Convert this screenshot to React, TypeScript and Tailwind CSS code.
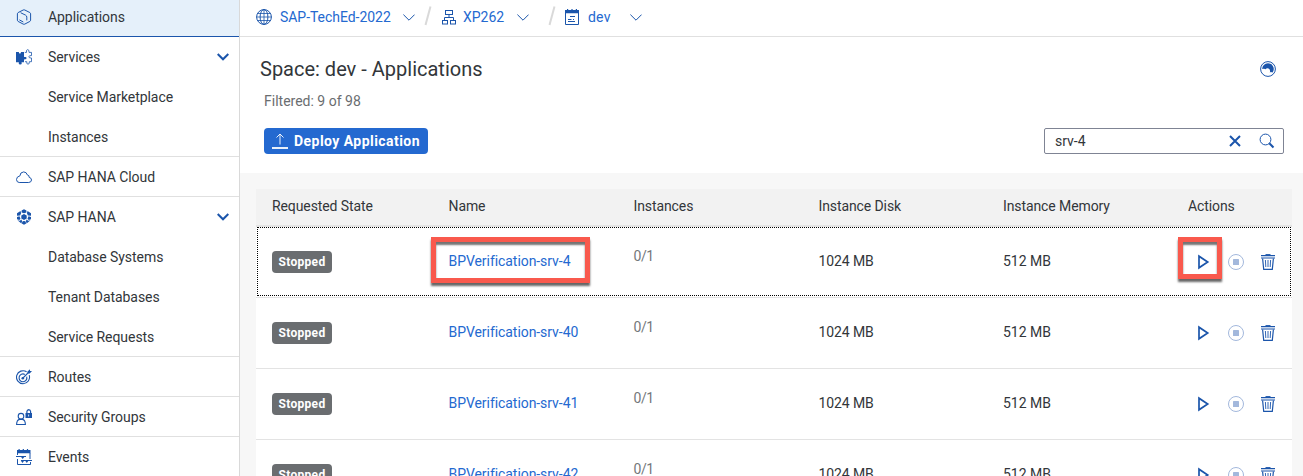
import React from "react";

type IconProps = { className?: string };

function Svg({ className = "", children }: { className?: string; children: React.ReactNode }) {
  return (
    <svg
      viewBox="0 0 16 16"
      width="16"
      height="16"
      fill="none"
      stroke="currentColor"
      strokeWidth="1"
      className={"shrink-0 " + className}
    >
      {children}
    </svg>
  );
}

const AppIcon = () => (
  <Svg>
    <path d="M7.200 1q.8-.4 1.600 0l5.100 2.600q.7.400.7 1.200v6.400q0 .8-.7 1.200l-5.100 2.700q-.8.400-1.600 0l-5.100-2.700q-.7-.4-.7-1.200V4.800q0-.8.7-1.200z" />
    <path d="m4.600 3.700 4.900 2.400q1.300.7 1.300 2v3.300M3.400 10.900l3.900 2.100" />
  </Svg>
);

const PuzzleIcon = () => (
  <Svg>
    <path
      fill="currentColor"
      stroke="none"
      d="M0 3h3q-.3.5 0 1.100.9 1 1.800 0 .3-.6 0-1.100H8v4.700q.2.600 1.200.3 1.300-.2 1.300 1.100t-1.300 1.200q-1-.3-1.200.5v2.400H5.600q-.2.300.2.900 0 1.500-1.600 1.500t-1.500-1.500q.3-.6.100-.9H0z"
    />
    <path
      strokeWidth=".8"
      d="M8.800 3.400h1.700q-.5-2.700 1.200-2.800 1.700.1 1.300 2.800h2.500v3.200q-2.600-.3-2.600 1.200t2.600 1.200v3.700h-2.200q.4 2.400-1.300 2.500-1.700-.1-1.200-2.500H9"
    />
  </Svg>
);

const CloudIcon = () => (
  <Svg>
    <path d="M3.200 13.500h9.500q2.700-.2 2.800-2.500-.1-2.200-2.300-2.600.2-2.300-1.900-2.500-.6-2.800-3.600-3-3.600.2-3.800 4Q.600 7.500.5 10.500q.1 2.900 2.700 3z" />
  </Svg>
);

const HanaIcon = () => (
  <Svg>
    <g fill="currentColor" stroke="none">
      <path d="m8 4.900 2.700 1.600v3L8 11.100 5.300 9.500v-3z" />
      <path d="M5.600 1.600 8 .2l2.400 1.400v1.900L8 4.200l-2.400-.7z" />
      <path d="m1 4.200 3.500-2.100.6 2.200-1 2.200L1 6.800zM15 4.200l-3.500-2.100-.6 2.200 1 2.200 3.100.3z" />
      <path d="M1 7.900 3.500 7.300 4.500 9.800 3.300 11 1 10.200zM15 7.900l-2.500-.6-1 2.500L12.700 11l2.300-.8z" />
      <path d="m1.500 11.300 2.400.5 1.400-1.200.8 1.500-.7 2.300zM14.500 11.300l-2.400.5-1.400-1.200-.8 1.500.7 2.300z" />
      <path d="M6.600 12.300 8 11.900l1.400.4.8 2.200L8 15.800l-2.200-1.300z" />
    </g>
  </Svg>
);

const TargetIcon = () => (
  <Svg>
    <path d="M10.600 2.800A6.500 6.500 0 1 0 13.200 6.200" strokeWidth="1.100" />
    <path d="M8.800 5.400A3.900 3.900 0 1 0 10.700 7.700" strokeWidth="1.100" />
    <path strokeWidth="1.300" d="m6.600 9.400 6-6" />
    <circle cx="6.800" cy="9.200" r="1.300" fill="currentColor" stroke="none" />
    <path fill="currentColor" stroke="none" d="m11.500 2.400 2.500-2.200v1.800h2l-2.300 2.500h-2.200z" />
  </Svg>
);

const UserLockIcon = () => (
  <Svg>
    <circle cx="5" cy="7.200" r="2.800" strokeWidth="1.100" />
    <path strokeWidth="1.100" d="M.6 15.500q.1-4.600 3-5.100h2.800q2.900.5 3 5.100z" />
    <path strokeWidth="1.200" d="M10.900 4.500V2.500q.2-1.800 1.900-1.900 1.600.1 1.800 1.900v2" />
    <path fill="currentColor" stroke="none" fillRule="evenodd" d="M9.500 4H16v5H9.500zm2.800 1.500v2h.8v-2z" />
  </Svg>
);

const EventsIcon = () => (
  <Svg>
    <path fill="currentColor" stroke="none" d="M1 1h1.500V0h1.200v1h3V0h1.200v1h3V0h1.200v1H14.500v3.300H1z" />
    <path d="M1.500 4v2M14 4v6M1.500 10v5.500H14.500V13" />
    <path d="M0 7.500h10M5 11.500h11" />
    <path fill="currentColor" stroke="none" d="M4.700 7.500h4L6.700 10zM4.700 11.500h3.600L6.500 13.900zM9 11.500h3.600l-1.800 2.400z" />
  </Svg>
);

const GlobeIcon = () => (
  <Svg>
    <circle cx="8" cy="8" r="7.400" />
    <ellipse cx="8" cy="8" rx="3.900" ry="7.400" />
    <path d="M8 .6v14.800M1.600 4.500h12.800M.6 8h14.800M1.600 11.500h12.800" strokeWidth=".8" />
  </Svg>
);

const OrgIcon = () => (
  <Svg>
    <rect x="4.500" y="1.500" width="7" height="4" />
    <path d="M8 5.500v3M3.500 11.500v-3h9v3" />
    <rect x="1.500" y="11.500" width="5" height="3.500" />
    <rect x="9.500" y="11.500" width="5" height="3.500" />
  </Svg>
);

const SpaceIcon = () => (
  <Svg>
    <path d="M1.500 3.500v12h13v-12" />
    <path fill="currentColor" stroke="none" d="M1 1h2V0h1.200v1h3.200V0h1.200v1h3.200V0H13v1h2v3.200H1z" />
    <path d="M6 7.500h5M4 10.500h3.500M9 10.500h1M4 12.500h7" />
  </Svg>
);

const SyncIcon = () => (
  <Svg>
    <circle cx="8" cy="8" r="7.400" />
    <path
      fill="currentColor"
      stroke="none"
      d="M2.200 8A5.800 5.600 0 0 1 8 2.200 5.800 5.800 0 0 1 12.600 11.400l-1.700-.5-1.100.7Q10.800 8.500 8.500 7.500 6.500 6.900 5.600 8.300L4 7.700z"
    />
  </Svg>
);

const UploadIcon = () => (
  <Svg>
    <path d="M8 11.500V1M4.500 4.500 8 1l3.500 3.500" strokeWidth=".9" />
    <path d="M0 15h16" strokeWidth="1.800" />
  </Svg>
);

const CloseIcon = () => (
  <Svg>
    <path strokeWidth="2" d="m3 3 10 10M13 3 3 13" />
  </Svg>
);

const SearchIcon = () => (
  <Svg>
    <circle cx="6.500" cy="6.500" r="5.400" />
    <path strokeWidth="2" d="m10.300 10.300 4.200 4.200" />
  </Svg>
);

const PlayIcon = () => (
  <Svg>
    <path strokeWidth="1.700" d="M3 2.200v11.600l8.700-5.800z" />
  </Svg>
);

const StopIcon = () => (
  <Svg className="text-[#a3b8dc]">
    <circle cx="8" cy="8" r="7.500" />
    <rect x="5" y="5" width="6" height="6" rx=".6" fill="currentColor" stroke="none" />
  </Svg>
);

const TrashIcon = () => (
  <Svg>
    <path d="M5.500.6h5" />
    <path d="M1 1.600h14M1 4h14" strokeWidth="1.200" />
    <path strokeWidth="1.200" d="M2.600 4.500 3.700 15.400h8.600L13.400 4.500" />
    <path strokeWidth=".9" d="m5.400 6 .4 7M8 6v7M10.600 6l-.4 7" />
  </Svg>
);

function Chevron({ className = "" }: IconProps) {
  return (
    <svg
      viewBox="0 0 12 7"
      width="12"
      height="7"
      fill="none"
      stroke="currentColor"
      className={"shrink-0 " + className}
    >
      <path d="m.4.6 5.600 5.600L11.600.6" />
    </svg>
  );
}

function Slash({ className = "" }: IconProps) {
  return (
    <svg viewBox="0 0 8 20" width="8" height="20" className={"shrink-0 " + className}>
      <path d="M6.500.5 1.500 19" stroke="#d9d9d9" strokeWidth="2" fill="none" />
    </svg>
  );
}

type NavEntry = {
  label: string;
  icon?: React.ReactNode;
  expandable?: boolean;
  divider?: boolean;
  active?: boolean;
};

const nav: NavEntry[] = [
  { label: "Applications", icon: <AppIcon />, active: true },
  { label: "Services", icon: <PuzzleIcon />, expandable: true },
  { label: "Service Marketplace" },
  { label: "Instances", divider: true },
  { label: "SAP HANA Cloud", icon: <CloudIcon />, divider: true },
  { label: "SAP HANA", icon: <HanaIcon />, expandable: true },
  { label: "Database Systems" },
  { label: "Tenant Databases" },
  { label: "Service Requests", divider: true },
  { label: "Routes", icon: <TargetIcon />, divider: true },
  { label: "Security Groups", icon: <UserLockIcon />, divider: true },
  { label: "Events", icon: <EventsIcon /> },
];

function NavRow({ label, icon, expandable, divider, active }: NavEntry) {
  const tone = active
    ? "border-[#1b55ab] bg-[#e5f0fa]"
    : divider
      ? "border-[#e0e0e0]"
      : "border-transparent";
  return (
    <li className={"flex h-10 shrink-0 items-center border-b pr-[10px] pl-4 pt-px " + tone}>
      <span className="w-8 text-[#1b55ab]">{icon}</span>
      <span className="flex-1 tracking-[-0.06px]">{label}</span>
      {expandable && (
        <svg viewBox="0 0 12 8" width="12" height="8" fill="none" className="text-[#1b55ab]">
          <path d="m.7 1 5.300 5.300L11.300 1" stroke="currentColor" strokeWidth="2" />
        </svg>
      )}
    </li>
  );
}

const columns = ["Requested State", "Name", "Instances", "Instance Disk", "Instance Memory", "Actions"];
const apps = ["BPVerification-srv-4", "BPVerification-srv-40", "BPVerification-srv-41", "BPVerification-srv-42"];

function AppRow({ name, selected }: { name: string; selected: boolean }) {
  return (
    <div className="relative grid h-[71px] shrink-0 grid-cols-[176.500px_185px_185px_184.500px_185px_1fr] items-center border-b border-[#e3e3e3] bg-white pl-4">
      {selected && (
        <div className="pointer-events-none absolute inset-x-px top-0 bottom-px border border-dotted border-black" />
      )}
      <div>
        <span className="inline-flex h-[22px] w-[60px] items-center justify-center rounded-[4px] bg-[#6a6d70] align-middle text-[12px] font-bold tracking-[0.3px] text-white">
          Stopped
        </span>
      </div>
      <div className="-mt-[2px] tracking-[-0.06px] text-[#2469d0]">
        <span className="relative">
          {name}
          {selected && (
            <span className="absolute -top-4 -left-[17.500px] h-[46px] w-[159px] border-5 border-[#f9594d] shadow-[0_3px_2px_rgba(0,0,0,0.6),inset_0_3px_2px_rgba(0,0,0,0.55)]" />
          )}
        </span>
      </div>
      <div className="-mt-[12px] tracking-[-0.4px] text-[#74777a]">0/1</div>
      <div className="-mt-[2px] tracking-[-0.1px]">1024 MB</div>
      <div className="-mt-[2px]">512 MB</div>
      <div className="flex items-center gap-4 pl-2 text-[#1b55ab]">
        <span className="relative">
          <PlayIcon />
          {selected && (
            <span className="absolute -top-[17px] -left-[18px] h-[42px] w-[44px] border-5 border-[#f9594d] shadow-[0_3px_2px_rgba(0,0,0,0.6),inset_0_3px_2px_rgba(0,0,0,0.55)]" />
          )}
        </span>
        <StopIcon />
        <TrashIcon />
      </div>
    </div>
  );
}

export default function App() {
  return (
    <div className="flex h-[476px] w-[1303px] overflow-hidden bg-white font-['Roboto',sans-serif] text-[14px] leading-5 text-[#32363a]">
      <nav className="w-60 shrink-0 overflow-hidden border-r border-[#d9d9d9]">
        <ul className="-mt-[3px] flex flex-col">
          {nav.map((item) => (
            <NavRow key={item.label} {...item} />
          ))}
        </ul>
      </nav>

      <main className="flex min-w-0 flex-1 flex-col">
        <header className="flex h-[37px] shrink-0 items-center border-b border-[#e0e0e0] pb-[2px] pl-4 text-[#1b55ab]">
          <GlobeIcon />
          <span className="ml-2 w-[123px] tracking-[-0.04px] text-[#2469d0]">SAP-TechEd-2022</span>
          <Chevron />
          <Slash className="-mt-[3px] ml-[9px]" />
          <span className="ml-[9px]">
            <OrgIcon />
          </span>
          <span className="ml-[6px] w-[54px] text-[#2469d0]">XP262</span>
          <Chevron />
          <Slash className="-mt-[3px] ml-[19px]" />
          <span className="ml-[8px]">
            <SpaceIcon />
          </span>
          <span className="ml-[8px] w-[42px] tracking-[0.2px] text-[#2469d0]">dev</span>
          <Chevron />
        </header>

        <section className="flex h-[136px] shrink-0 flex-col pr-[19px] pl-6">
          <div className="mt-5 flex h-6 items-center justify-between pr-2">
            <h1 className="-ml-1 text-[20px] leading-6">Space: dev - Applications</h1>
            <span className="text-[#1b55ab]">
              <SyncIcon />
            </span>
          </div>
          <p className="mt-[10px] text-[#6a6d70]">Filtered: 9 of 98</p>
          <div className="mt-[17px] flex justify-between">
            <button className="flex h-[26px] w-[164px] items-center gap-[6px] rounded-[4px] bg-[#2469d0] pl-2 font-bold tracking-[0.45px] whitespace-nowrap text-white">
              <UploadIcon />
              Deploy Application
            </button>
            <div className="flex h-[26px] w-60 items-center rounded-[2px] border border-[#7f8494] pl-[10px] text-[#1b55ab]">
              <span className="w-[172px] text-[#32363a]">srv-4</span>
              <CloseIcon />
              <span className="ml-4">
                <SearchIcon />
              </span>
            </div>
          </div>
        </section>

        <section className="flex min-h-0 flex-1 flex-col overflow-hidden bg-[#f7f7f7] pt-4 pr-[11px] pl-4">
          <div className="grid h-[38px] shrink-0 grid-cols-[176.500px_185px_185px_184.500px_185px_1fr] items-center border-b-2 border-[#e4e4e4] bg-[#f2f2f2] pb-[2px] pl-4 tracking-[-0.1px]">
            {columns.map((c) => (
              <span key={c}>{c}</span>
            ))}
          </div>
          {apps.map((name, i) => (
            <AppRow key={name} name={name} selected={i === 0} />
          ))}
        </section>
      </main>
    </div>
  );
}
